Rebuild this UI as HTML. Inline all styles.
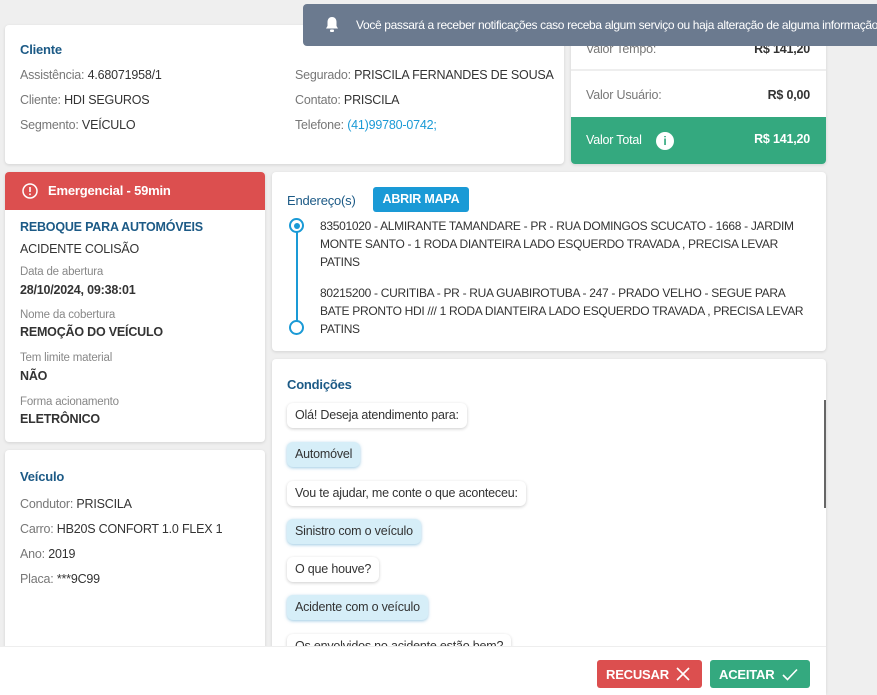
<!DOCTYPE html>
<html style="width:877px;height:695px;overflow:hidden"><head><meta charset="utf-8"><style>
*{box-sizing:border-box;margin:0;padding:0}
body{width:877px;height:695px;background:#efefef;font-family:"Liberation Sans",sans-serif;font-size:12.5px;color:#333;position:relative;overflow:hidden;letter-spacing:-0.2px}
.card{position:absolute;background:#fff;border-radius:4px;box-shadow:0 1px 3px rgba(0,0,0,.12)}
.t{color:#1c5a86;font-weight:bold;font-size:13px}
.g{color:#777}
.a{position:absolute;white-space:nowrap}
.lbl{color:#888;font-size:11.5px}
.val{font-weight:bold;color:#333;font-size:12.5px}
.bub{position:absolute;left:15px;padding:0 8px;height:25px;line-height:25px;border-radius:6px;background:#fff;box-shadow:0 1px 3px rgba(0,0,0,.2);white-space:nowrap}
.bub.b{background:#d6eef8;box-shadow:0 1px 3px rgba(60,150,200,.5)}
</style></head><body>

<div class="card" style="left:5px;top:25px;width:559px;height:139px">
  <div class="a t" style="left:15px;top:17px">Cliente</div>
  <div class="a" style="left:15px;top:43px"><span class="g">Assistência:</span> 4.68071958/1</div>
  <div class="a" style="left:15px;top:68px"><span class="g">Cliente:</span> HDI SEGUROS</div>
  <div class="a" style="left:15px;top:93px"><span class="g">Segmento:</span> VEÍCULO</div>
  <div class="a" style="left:290px;top:43px"><span class="g">Segurado:</span> PRISCILA FERNANDES DE SOUSA</div>
  <div class="a" style="left:290px;top:68px"><span class="g">Contato:</span> PRISCILA</div>
  <div class="a" style="left:290px;top:93px"><span class="g">Telefone:</span> <span style="color:#1a9ad6">(41)99780-0742;</span></div>
</div>

<div class="card" style="left:571px;top:25px;width:255px;height:139px;overflow:hidden">
  <div class="a g" style="left:15px;top:17px">Valor Tempo:</div>
  <div class="a val" style="right:16px;top:17px">R$ 141,20</div>
  <div style="position:absolute;left:0;right:0;top:44px;height:2px;background:#eee"></div>
  <div class="a g" style="left:15px;top:63px">Valor Usuário:</div>
  <div class="a val" style="right:16px;top:63px">R$ 0,00</div>
  <div style="position:absolute;left:0;right:0;top:92px;bottom:0;background:#34a97f;color:#fff">
    <div class="a" style="left:15px;top:16px">Valor Total</div>
    <div class="a" style="left:85px;top:15px;width:18px;height:18px;border-radius:50%;background:#fff;color:#34a97f;font-weight:bold;text-align:center;line-height:18px;font-size:12px">i</div>
    <div class="a" style="right:16px;top:15px;font-weight:bold">R$ 141,20</div>
  </div>
</div>

<div class="a" style="left:303px;top:4px;width:580px;height:42px;background:#6b7a8f;color:#fff;border-radius:4px;font-size:12px">
  <svg style="position:absolute;left:21px;top:12px" width="16" height="17" viewBox="0 0 16 17"><path d="M8 1c-3 0-4.5 2.3-4.5 5v4L2 12.5h12L12.5 10V6C12.5 3.3 11 1 8 1z" fill="#fff"/><rect x="6" y="13.5" width="4" height="2.5" rx="1" fill="#fff"/></svg>
  <div class="a" style="left:53px;top:14px;letter-spacing:-0.35px">Você passará a receber notificações caso receba algum serviço ou haja alteração de alguma informação</div>
</div>

<div class="card" style="left:5px;top:172px;width:260px;height:270px;overflow:hidden">
  <div style="height:38px;background:#dc4f4f;color:#fff;position:relative">
    <svg style="position:absolute;left:17px;top:11px" width="16" height="16" viewBox="0 0 16 16"><circle cx="8" cy="8" r="7" fill="none" stroke="#fff" stroke-width="1.5"/><rect x="7.2" y="4" width="1.6" height="5" fill="#fff"/><rect x="7.2" y="10.5" width="1.6" height="1.6" fill="#fff"/></svg>
    <div class="a" style="left:43px;top:11px;font-weight:bold;font-size:13px">Emergencial - 59min</div>
  </div>
  <div class="a t" style="left:15px;top:48px;font-size:12.5px">REBOQUE PARA AUTOMÓVEIS</div>
  <div class="a" style="left:15px;top:70px">ACIDENTE COLISÃO</div>
  <div class="a lbl" style="left:15px;top:94px">Data de abertura</div>
  <div class="a val" style="left:15px;top:111px">28/10/2024, 09:38:01</div>
  <div class="a lbl" style="left:15px;top:137px">Nome da cobertura</div>
  <div class="a val" style="left:15px;top:153px">REMOÇÃO DO VEÍCULO</div>
  <div class="a lbl" style="left:15px;top:180px">Tem limite material</div>
  <div class="a val" style="left:15px;top:197px">NÃO</div>
  <div class="a lbl" style="left:15px;top:224px">Forma acionamento</div>
  <div class="a val" style="left:15px;top:240px">ELETRÔNICO</div>
</div>

<div class="card" style="left:5px;top:450px;width:260px;height:250px">
  <div class="a t" style="left:15px;top:19px">Veículo</div>
  <div class="a" style="left:15px;top:47px"><span class="g">Condutor:</span> PRISCILA</div>
  <div class="a" style="left:15px;top:72px"><span class="g">Carro:</span> HB20S CONFORT 1.0 FLEX 1</div>
  <div class="a" style="left:15px;top:97px"><span class="g">Ano:</span> 2019</div>
  <div class="a" style="left:15px;top:122px"><span class="g">Placa:</span> ***9C99</div>
</div>

<div class="card" style="left:272px;top:172px;width:554px;height:179px">
  <div class="a t" style="left:15px;top:21px;font-weight:normal">Endereço(s)</div>
  <div class="a" style="left:101px;top:15px;width:96px;height:25px;background:#1a9ad6;color:#fff;border-radius:3px;font-weight:bold;text-align:center;line-height:25px;font-size:12.5px">ABRIR MAPA</div>
  <div class="a" style="left:17px;top:46px;width:15px;height:15px;border:2px solid #1a9ad6;border-radius:50%"><div style="margin:2.5px;width:6px;height:6px;border-radius:50%;background:#1a9ad6"></div></div>
  <div class="a" style="left:23.5px;top:60px;width:2px;height:89px;background:#1a9ad6"></div>
  <div class="a" style="left:17px;top:148px;width:15px;height:15px;border:2px solid #1a9ad6;border-radius:50%;background:#fff"></div>
  <div class="a" style="left:48px;top:45px;line-height:18px;white-space:normal;width:500px;font-size:12px;letter-spacing:-0.3px">83501020 - ALMIRANTE TAMANDARE - PR - RUA DOMINGOS SCUCATO - 1668 - JARDIM MONTE SANTO - 1 RODA DIANTEIRA LADO ESQUERDO TRAVADA , PRECISA LEVAR PATINS</div>
  <div class="a" style="left:48px;top:112px;line-height:18px;white-space:normal;width:485px;font-size:12px;letter-spacing:-0.3px">80215200 - CURITIBA - PR - RUA GUABIROTUBA - 247 - PRADO VELHO - SEGUE PARA BATE PRONTO HDI /// 1 RODA DIANTEIRA LADO ESQUERDO TRAVADA , PRECISA LEVAR PATINS</div>
</div>

<div class="card" style="left:272px;top:359px;width:554px;height:336px;overflow:hidden">
  <div class="a t" style="left:15px;top:18px">Condições</div>
  <div class="a" style="right:0;top:41px;width:2px;height:108px;background:#666"></div>
  <div class="bub" style="top:44px">Olá! Deseja atendimento para:</div>
  <div class="bub b" style="top:83px">Automóvel</div>
  <div class="bub" style="top:122px">Vou te ajudar, me conte o que aconteceu:</div>
  <div class="bub b" style="top:160px">Sinistro com o veículo</div>
  <div class="bub" style="top:198px">O que houve?</div>
  <div class="bub b" style="top:236px">Acidente com o veículo</div>
  <div class="bub" style="top:275px">Os envolvidos no acidente estão bem?</div>
</div>

<div class="a" style="left:0;top:646px;width:826px;height:49px;background:#fff;border-top:1px solid #eee">
  <div class="a" style="left:597px;top:13px;width:105px;height:28px;background:#dc4f4f;border-radius:3px;color:#fff;font-weight:bold;font-size:13px">
    <span class="a" style="left:9px;top:7px">RECUSAR</span>
    <svg class="a" style="left:79px;top:7px" width="14" height="14" viewBox="0 0 14 14"><path d="M1 1L13 13M13 1L1 13" stroke="#fff" stroke-width="1.6"/></svg>
  </div>
  <div class="a" style="left:710px;top:13px;width:100px;height:28px;background:#34a97f;border-radius:3px;color:#fff;font-weight:bold;font-size:13px">
    <span class="a" style="left:9px;top:7px">ACEITAR</span>
    <svg class="a" style="left:72px;top:8px" width="16" height="13" viewBox="0 0 16 13"><path d="M1 7L5.5 11.5L15 1.5" fill="none" stroke="#fff" stroke-width="1.6"/></svg>
  </div>
</div>
</body></html>
